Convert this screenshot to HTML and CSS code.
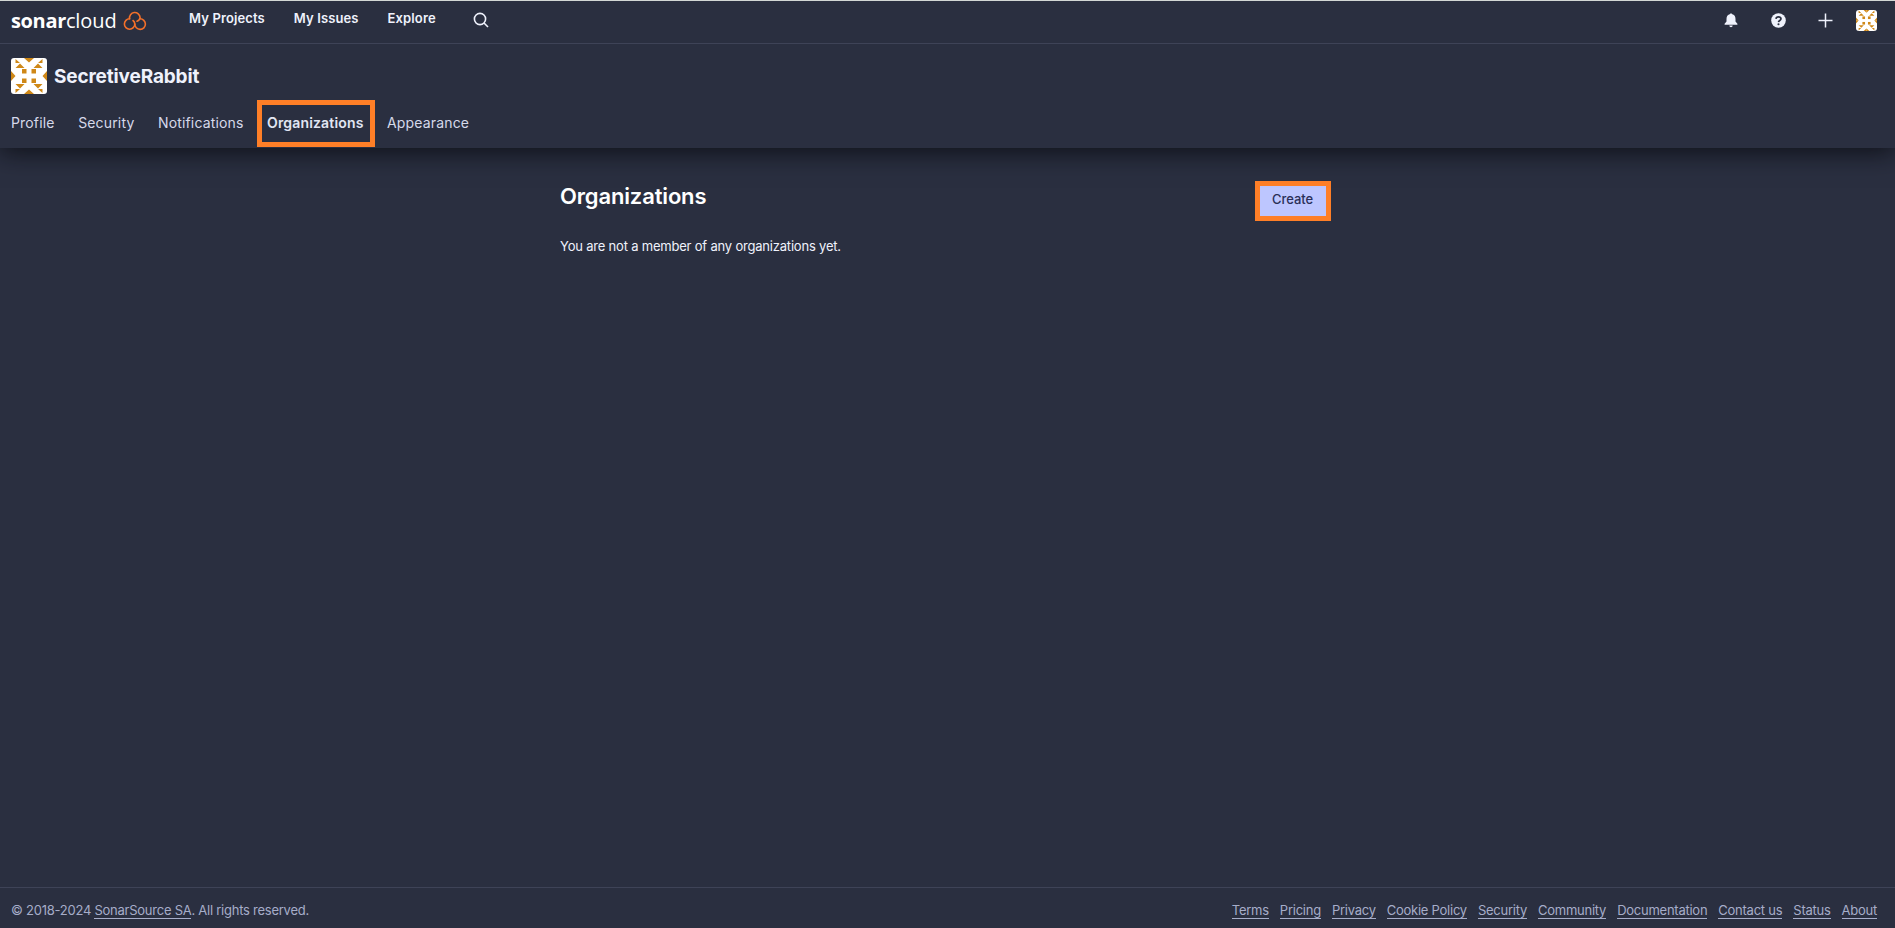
FILE: index.html
```html
<!DOCTYPE html>
<html lang="en">
<head>
<meta charset="utf-8">
<title>Organizations</title>
<link rel="stylesheet" href="styles.css">
</head>
<body>
<svg class="defs" width="0" height="0">
  <symbol id="avatar" viewBox="0 0 36 36">
    <rect width="36" height="36" fill="#fff"/>
    <g id="quarter" fill="#cf8817">
      <path d="M13 0H18V4.500ZM0 13V18H4.500ZM4.500 1V5H9ZM9 5.500V10H13.500ZM9 5.500V10H4.500Z"/>
      <rect x="11" y="11" width="4.500" height="4.500"/>
    </g>
    <use href="#quarter" transform="matrix(-1 0 0 1 36 0)"/>
    <use href="#quarter" transform="matrix(1 0 0 -1 0 36)"/>
    <use href="#quarter" transform="matrix(-1 0 0 -1 36 36)"/>
  </symbol>
</svg>
<header class="topbar">
  <div class="logo"><span class="wordmark"><b>sonar</b>cloud</span>
    <svg class="cloud" viewBox="0 0 24 22" width="24" height="22" fill="none" stroke="#f3702a" stroke-width="1.600" stroke-linecap="round">
      <path d="M6.600 8.800A5.200 5.200 0 1 0 11.800 14Q11.800 11.800 10 10.500"/>
      <path d="M6.600 8.800A5.300 5.300 0 1 1 17.100 7.600Q16.900 10 14 11.200"/>
      <path d="M11.800 14A5.300 5.300 0 1 0 17 8.800"/>
    </svg>
  </div>
  <nav class="mainnav"><a>My Projects</a><a>My Issues</a><a>Explore</a></nav>
  <svg class="search" viewBox="0 0 16 16" width="16" height="16" fill="none" stroke="#eff2fc" stroke-width="1.600"><circle cx="7" cy="7" r="5.600"/><path d="M11 11L15 15"/></svg>
  <div class="tools">
    <svg class="bell" width="14" height="15" viewBox="0 0 14 15" fill="#eff2fc"><path d="M6.200 1a.8.8 0 0 1 1.600 0C10.500 1.500 11.500 3.500 11.500 6v2.500l1.900 2.300v.9H.6v-.9l1.900-2.300V6c0-2.500 1-4.500 3.700-5ZM5.300 12.600h3.400a1.700 1.700 0 0 1-3.400 0Z"/></svg>
    <svg class="help" width="15" height="15" viewBox="0 0 15 15"><circle cx="7.500" cy="7.500" r="7.300" fill="#eff2fc"/><path d="M5 5.800Q5.200 3.800 7.500 3.800T10 5.800Q10 6.800 8.800 7.500T7.500 9.200" fill="none" stroke="#2a2f40" stroke-width="1.700"/><circle cx="7.500" cy="11.200" r="1.050" fill="#2a2f40"/></svg>
    <svg class="plus" width="15" height="15" viewBox="0 0 15 15"><path d="M7.500 .5v14M.5 7.500h14" stroke="#eff2fc" stroke-width="1.500"/></svg>
    <svg class="user" width="21" height="21"><use href="#avatar"/></svg>
  </div>
</header>
<section class="account">
  <div class="identity"><svg class="avatar" width="36" height="36"><use href="#avatar"/></svg><h2>SecretiveRabbit</h2></div>
  <nav class="tabs"><a>Profile</a><a>Security</a><a>Notifications</a><a class="active">Organizations</a><a>Appearance</a></nav>
</section>
<main>
  <div class="content">
    <div class="intro"><h1>Organizations</h1><p>You are not a member of any organizations yet.</p></div>
    <button class="create">Create</button>
  </div>
</main>
<footer>
  <p>© 2018-2024 <a>SonarSource SA</a>. All rights reserved.</p>
  <nav><a>Terms</a><a>Pricing</a><a>Privacy</a><a>Cookie Policy</a><a>Security</a><a>Community</a><a>Documentation</a><a>Contact us</a><a>Status</a><a>About</a></nav>
</footer>
</body>
</html>
```
FILE: styles.css
```css
*, *::after { box-sizing: border-box; }
body {
  margin: 0;
  height: 928px;
  display: flex;
  flex-direction: column;
  overflow: hidden;
  background: #2a2f40;
  color: #eff2fc;
  font-family: Inter, "Liberation Sans", sans-serif;
  font-size: 13px;
}
h1, h2, p { margin: 0; }
svg { display: block; flex: none; }
.defs { position: absolute; }
.topbar {
  height: 44px;
  flex: none;
  display: flex;
  align-items: flex-start;
  padding-left: 11px;
  border-top: 1px solid #d3d8d5;
  border-bottom: 1px solid #3e4357;
}
.logo { display: flex; width: 178px; color: #fff; }
.wordmark {
  width: 112px;
  padding-top: 8px;
  font: 400 20px/24px "Open Sans", sans-serif;
  letter-spacing: -0.1px;
}
.wordmark b { font-weight: 700; letter-spacing: -0.35px; }
.cloud { margin-top: 9px; }
.mainnav { display: flex; gap: 29px; padding-top: 8px; line-height: 18px; font-weight: 600; letter-spacing: 0.12px; }
.search { margin: 11px 0 0 37px; }
.tools { display: flex; margin-left: auto; padding-right: 18px; }
.bell { margin: 12px 33px 0 0; }
.help { margin: 12px 32px 0 0; }
.plus { margin: 12px 23px 0 0; }
.user { margin-top: 9px; border-radius: 3px; }
.account {
  height: 104px;
  flex: none;
  padding: 14px 11px 0;
  box-shadow: 0 4px 24px rgba(8, 9, 14, 0.8);
  clip-path: inset(0 0 -40px 0);
  position: relative;
}
.identity { display: flex; align-items: center; gap: 7px; }
.avatar { border-radius: 3px; }
.identity h2 { padding-top: 2px; font-size: 19px; line-height: 24px; font-weight: 700; letter-spacing: -0.15px; }
.tabs { display: flex; gap: 23.500px; margin-top: 19px; font-size: 14px; line-height: 20px; letter-spacing: 0.16px; color: #d6d9ea; }
.tabs .active { position: relative; font-weight: 600; color: #e1e6f3; }
.tabs .active::after {
  content: "";
  position: absolute;
  left: -10px;
  top: -13px;
  width: 118px;
  height: 47px;
  border: 5px solid #ff7f27;
}
main { flex: 1; display: flex; justify-content: center; }
.content { width: 771px; margin-right: 4px; padding-top: 33px; display: flex; justify-content: space-between; align-items: flex-start; }
h1 { font-size: 22px; line-height: 30px; font-weight: 600; letter-spacing: -0.15px; color: #fff; }
.intro p { margin-top: 26px; line-height: 18px; letter-spacing: -0.2px; }
.create {
  width: 76px;
  height: 40px;
  padding: 0 1px 5px 0;
  border: 5px solid #ff7f27;
  background: #bdc6ff;
  color: #2a2f58;
  font: 500 13px Inter, sans-serif;
  letter-spacing: -0.05px;
}
footer {
  height: 41px;
  flex: none;
  display: flex;
  justify-content: space-between;
  padding: 14px 18px 0 11px;
  border-top: 1px solid #3e4357;
  color: #a6adc9;
  line-height: 16px;
  letter-spacing: -0.25px;
}
footer nav { display: flex; gap: 11px; align-items: flex-start; }
footer a { border-bottom: 1px solid #a6adc9; }
```
